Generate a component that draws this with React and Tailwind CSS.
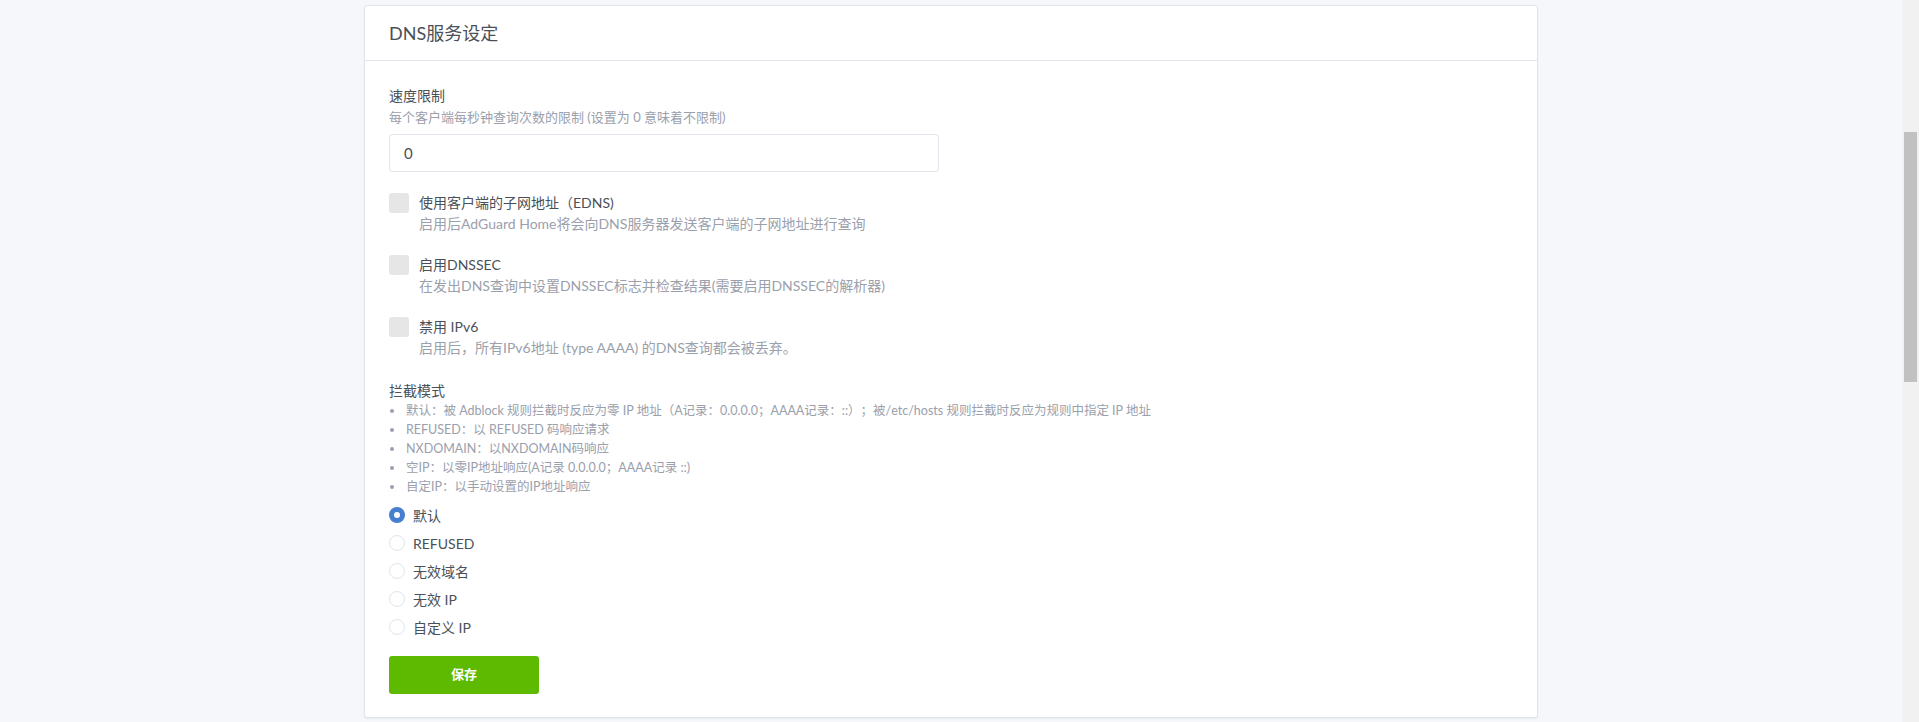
import React, { useState } from 'react';

const font = { fontFamily: 'Lato, "Noto Sans CJK SC", sans-serif' };

const checks = [
    { label: '使用客户端的子网地址（EDNS)', desc: '启用后AdGuard Home将会向DNS服务器发送客户端的子网地址进行查询' },
    { label: '启用DNSSEC', desc: '在发出DNS查询中设置DNSSEC标志并检查结果(需要启用DNSSEC的解析器)' },
    { label: '禁用 IPv6', desc: '启用后，所有IPv6地址 (type AAAA) 的DNS查询都会被丢弃。' },
];

const modes = [
    '默认：被 Adblock 规则拦截时反应为零 IP 地址（A记录：0.0.0.0；AAAA记录：::）；被/etc/hosts 规则拦截时反应为规则中指定 IP 地址',
    'REFUSED：以 REFUSED 码响应请求',
    'NXDOMAIN：以NXDOMAIN码响应',
    '空IP：以零IP地址响应(A记录 0.0.0.0；AAAA记录 ::)',
    '自定IP：以手动设置的IP地址响应',
];

const radios = ['默认', 'REFUSED', '无效域名', '无效 IP', '自定义 IP'];

const App = () => {
    const [limit, setLimit] = useState('0');
    const [mode, setMode] = useState(0);

    return (
        <div className="flex h-[722px] w-full overflow-hidden bg-[#f5f7fb] [text-spacing-trim:space-all]" style={font}>
            <div className="flex-1 pt-[5px]">
                <div className="mx-auto w-[1174px] rounded-[3px] border border-[#e0e5ec] bg-white shadow-[0_1px_2px_rgba(0,0,0,0.05)]">
                    <div className="flex h-[55px] items-center border-b border-[#e0e5ec] px-6">
                        <h2 className="text-[18px] text-[#495057]">DNS服务设定</h2>
                    </div>
                    <form className="px-6 pt-6 pb-[23px]" onSubmit={(e) => e.preventDefault()}>
                        <div className="text-[14px] leading-[21px] text-[#495057]">速度限制</div>
                        <div className="mt-[2px] text-[13px] leading-[18px] text-[#9aa0ac]">
                            每个客户端每秒钟查询次数的限制 (设置为 0 意味着不限制)
                        </div>
                        <input
                            type="text"
                            className="mt-2 h-[38px] w-[550px] rounded-[3px] border border-[#e0e5ec] px-[14px] text-[15px] text-[#495057] outline-none"
                            value={limit}
                            onChange={(e) => setLimit(e.target.value)}
                        />

                        <div className="mt-[21px] flex flex-col gap-[21px]">
                            {checks.map((c) => (
                                <div key={c.label}>
                                    <label className="flex items-center">
                                        <span className="h-5 w-5 rounded-[3px] bg-[#e6e6e6]"></span>
                                        <span className="ml-[10px] text-[14px] leading-5 text-[#495057]">{c.label}</span>
                                    </label>
                                    <div className="pl-[30px] text-[14px] leading-[21px] text-[#9aa0ac]">{c.desc}</div>
                                </div>
                            ))}
                        </div>

                        <div className="mt-[22px] text-[14px] leading-[21px] text-[#495057]">拦截模式</div>
                        <ul className="text-[12.5px] leading-[19px] text-[#9aa0ac]">
                            {modes.map((m) => (
                                <li key={m} className="flex items-center">
                                    <span className="mr-[12px] ml-[1px] h-[4px] w-[4px] rounded-full bg-[#9aa0ac]"></span>
                                    {m}
                                </li>
                            ))}
                        </ul>

                        <div className="mt-[5px] flex flex-col">
                            {radios.map((r, i) => (
                                <label key={r} className="flex h-7 cursor-pointer items-center" onClick={() => setMode(i)}>
                                    {mode === i ? (
                                        <span className="flex h-4 w-4 items-center justify-center rounded-full bg-[#467fcf]">
                                            <span className="h-[6px] w-[6px] rounded-full bg-white"></span>
                                        </span>
                                    ) : (
                                        <span className="h-4 w-4 rounded-full border border-[#e0e5ec] bg-white"></span>
                                    )}
                                    <span className="ml-2 text-[14px] text-[#495057]">{r}</span>
                                </label>
                            ))}
                        </div>

                        <button
                            type="submit"
                            className="mt-[15px] h-[38px] w-[150px] rounded-[3px] bg-[#5eba00] text-[13px] font-bold text-white"
                        >
                            保存
                        </button>
                    </form>
                </div>
            </div>
            <div className="flex w-[17px] flex-col bg-[#f1f1f1] pt-[132px]">
                <div className="mx-[2px] h-[250px] bg-[#c1c1c1]"></div>
            </div>
        </div>
    );
};

export default App;
